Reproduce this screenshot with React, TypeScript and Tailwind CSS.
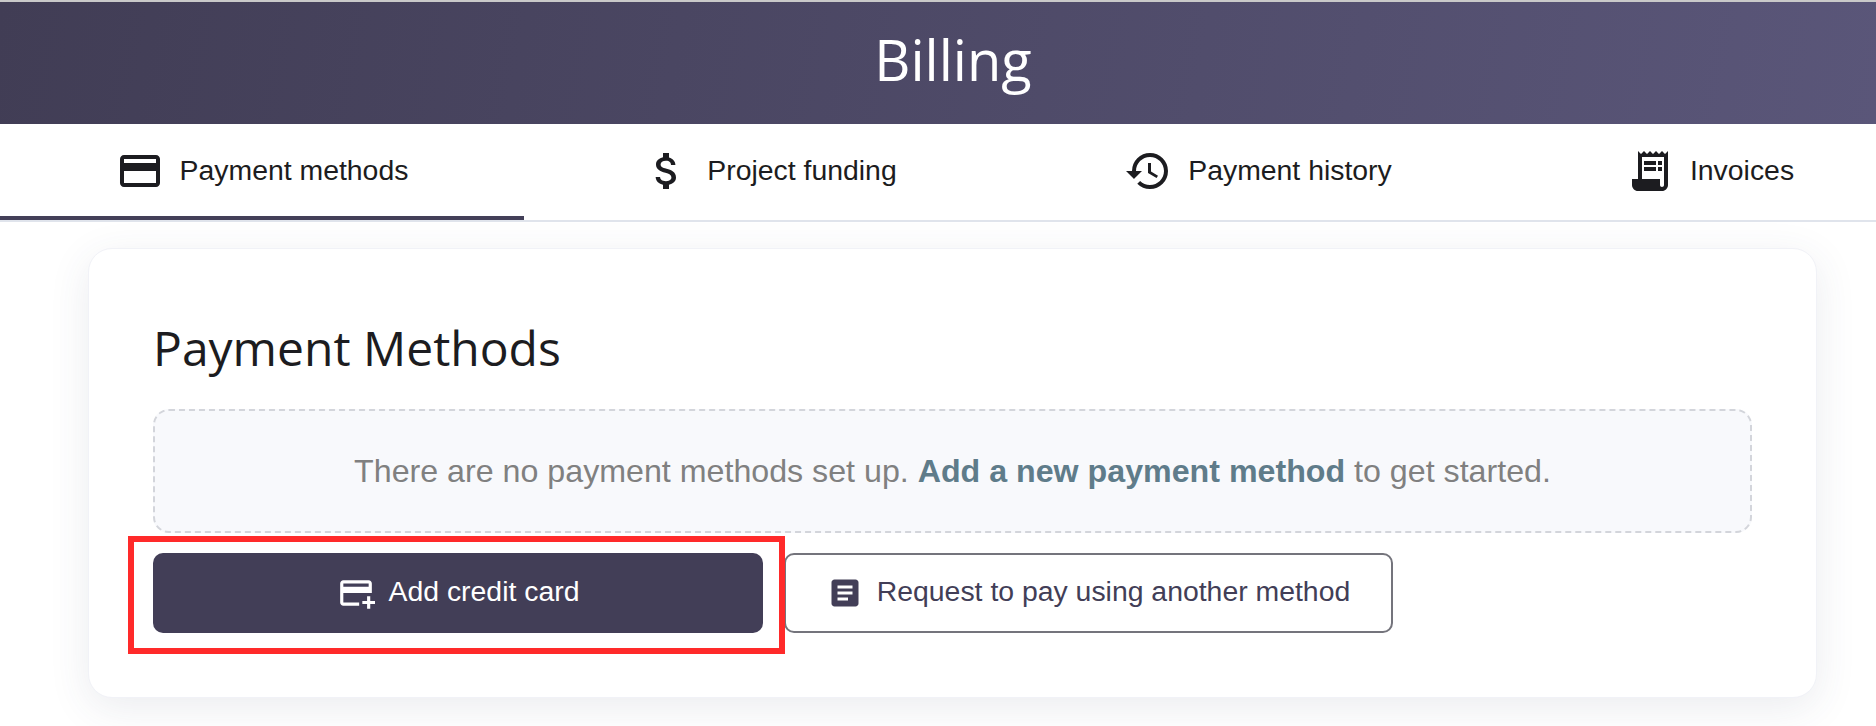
import { MdCreditCard, MdAttachMoney, MdHistory, MdReceiptLong, MdOutlineAddCard, MdArticle } from "react-icons/md";

const tabs = [
  { label: "Payment methods", Icon: MdCreditCard, width: "w-[524px]", active: true },
  { label: "Project funding", Icon: MdAttachMoney, width: "w-[492px]", active: false },
  { label: "Payment history", Icon: MdHistory, width: "w-[484px]", active: false },
  { label: "Invoices", Icon: MdReceiptLong, width: "w-[420px]", active: false },
];

const App = () => {
  return (
    <div className="h-[726px] w-full overflow-hidden bg-white font-['Liberation_Sans',Arial,sans-serif]">
      <div className="h-[2px] bg-[#c9c9c9]" />

      {/* Header */}
      <div className="flex h-[122px] items-center justify-center bg-[linear-gradient(100deg,#413d55,#5a5679)] pb-[8px] pl-[30px]">
        <h1 className="font-['Open_Sans',sans-serif] text-[56px] leading-none text-white">Billing</h1>
      </div>

      {/* Tabs */}
      <div className="flex h-[98px] overflow-hidden border-b-2 border-[#e0e4ec]">
        {tabs.map(({ label, Icon, width, active }) => (
          <div
            key={label}
            className={`flex h-[96px] shrink-0 items-center justify-center gap-[16px] pt-[1px] text-[#1c1c20] ${width} ${active ? "border-b-4 border-[#433f58]" : "pb-1"}`}
          >
            <Icon className="size-[48px] shrink-0" />
            <span className="text-[28.4px]">{label}</span>
          </div>
        ))}
      </div>

      {/* Card */}
      <div className="mx-[88px] mt-[26px] h-[450px] w-[1729px] rounded-[24px] border border-[#f1f2f7] bg-white px-[64px] pt-[66px] shadow-[0_10px_40px_rgba(60,70,100,0.1)]">
        <h2 className="font-['Open_Sans',sans-serif] text-[48px] leading-[66px] text-[#1c1c20]">Payment Methods</h2>

        <div className="mt-[28px] flex h-[124px] w-[1599px] items-center justify-center rounded-[16px] border-2 border-dashed border-[#d3d5db] bg-[#f8f9fc] text-[32.2px] text-[#808080]">
          <p>
            There are no payment methods set up. <span className="font-bold text-[#5f7c8a]">Add a new payment method</span> to get started.
          </p>
        </div>

        <div className="mt-[20px] flex gap-[21px]">
          <div className="relative">
            <button className="flex h-[80px] w-[610px] items-center justify-center gap-[14px] rounded-[10px] bg-[#423e57] pb-[3px] text-[28.4px] text-white">
              <MdOutlineAddCard className="mt-[3px] size-[38px]" />
              Add credit card
            </button>
            {/* Red highlight */}
            <div className="pointer-events-none absolute -top-[17px] -right-[22px] -bottom-[21px] -left-[25px] border-[6px] border-[#ff2a2a]" />
          </div>
          <button className="flex h-[80px] w-[609px] items-center justify-center gap-[14px] rounded-[10px] border-2 border-[#74747c] bg-white pb-[3px] text-[28.4px] text-[#423e57]">
            <MdArticle className="mt-[3px] size-[36px]" />
            Request to pay using another method
          </button>
        </div>
      </div>
    </div>
  );
};

export default App;
